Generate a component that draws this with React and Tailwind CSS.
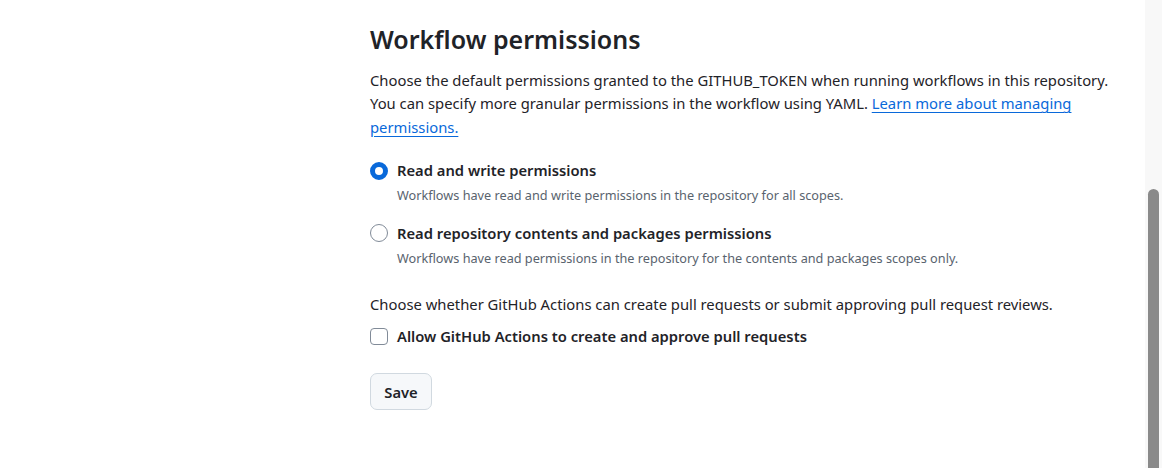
export default function App() {
  return (
    <div className="flex h-[468px] w-[1162px] overflow-hidden bg-white text-[#1f2328]" style={{ fontFamily: '"Noto Sans", "Open Sans", sans-serif' }}>
      {/* left column (sidebar area, empty here) */}
      <div className="w-[370px] shrink-0" />

      <main className="min-w-0 flex-1 pt-[23px]">
        <h2 className="text-[25px] font-semibold leading-[33px]">Workflow permissions</h2>
        <p className="mt-[12.5px] whitespace-nowrap text-[14.8px] leading-[23.5px]">
          Choose the default permissions granted to the GITHUB_TOKEN when running workflows in this repository.
          <br />
          You can specify more granular permissions in the workflow using YAML.{' '}
          <a href="#" className="text-[#0969da] underline underline-offset-[3px]">
            Learn more about managing
            <br />
            permissions.
          </a>
        </p>

        <div className="mt-[20px]">
          <label className="flex items-center gap-[9px]">
            <span className="h-[18px] w-[18px] shrink-0 rounded-full border-[5px] border-[#0969da] bg-white" />
            <span className="text-[14.75px] font-semibold leading-[23px]">Read and write permissions</span>
          </label>
          <p className="ml-[27px] mt-[3px] text-[12.7px] leading-[20px] text-[#59636e]">
            Workflows have read and write permissions in the repository for all scopes.
          </p>
        </div>

        <div className="mt-[16.5px]">
          <label className="flex items-center gap-[9px]">
            <span className="h-[18px] w-[18px] shrink-0 rounded-full border border-[#818b98] bg-white" />
            <span className="text-[14.75px] font-semibold leading-[23px]">Read repository contents and packages permissions</span>
          </label>
          <p className="ml-[27px] mt-[3px] text-[12.7px] leading-[20px] text-[#59636e]">
            Workflows have read permissions in the repository for the contents and packages scopes only.
          </p>
        </div>

        <p className="mt-[25.5px] text-[14.8px] leading-[23.3px]">
          Choose whether GitHub Actions can create pull requests or submit approving pull request reviews.
        </p>
        <label className="mt-[9px] flex items-center gap-[9px]">
          <span className="h-[17px] w-[18px] shrink-0 rounded-[4px] border border-[#818b98] bg-white" />
          <span className="text-[14.75px] font-semibold leading-[23px]">Allow GitHub Actions to create and approve pull requests</span>
        </label>

        <button className="mt-[25px] h-[37px] w-[62px] rounded-[7px] border border-[#d1d9e0] bg-[#f6f8fa] text-[14.75px] font-semibold">
          Save
        </button>
      </main>

      {/* scrollbar */}
      <div className="w-[17px] shrink-0 bg-[#f8f8f8] pl-[3px] pt-[189px]">
        <div className="h-[300px] w-[11px] rounded-t-full bg-[#8a8a8a]" />
      </div>
    </div>
  );
}
